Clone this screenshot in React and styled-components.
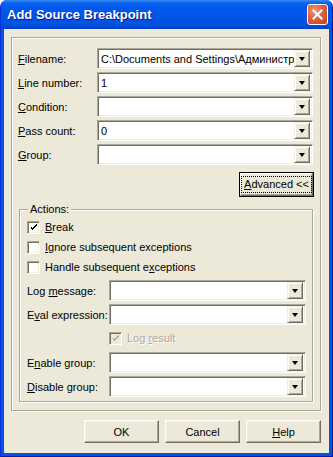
import React from 'react';
import styled, { createGlobalStyle } from 'styled-components';

const GlobalStyle = createGlobalStyle`
  html, body {
    margin: 0;
    padding: 0;
    background: #ffffff;
  }
  body {
    font-family: "Liberation Sans", Arial, sans-serif;
    font-size: 11px;
    color: #000;
  }
`;

const Window = styled.div`
  width: 333px;
  height: 457px;
  box-sizing: border-box;
  display: flex;
  flex-direction: column;
  background: #0054e3;
  border-radius: 7px 7px 0 0;
  border-left: 1px solid #0831d9;
  border-right: 1px solid #001ea0;
  border-bottom: 1px solid #001ea0;
  overflow: hidden;
`;

const TitleBar = styled.div`
  height: 29px;
  flex: none;
  display: flex;
  align-items: center;
  justify-content: space-between;
  padding: 0 4px 0 6px;
  background: linear-gradient(
    to bottom,
    #3d8cf5 0%,
    #0a63f0 10%,
    #0058ee 25%,
    #0055e5 60%,
    #0050dc 88%,
    #0040c8 100%
  );
`;

const Title = styled.span`
  font-family: "Liberation Sans", Arial, sans-serif;
  font-weight: bold;
  font-size: 13px;
  color: #fff;
  text-shadow: 1px 1px 0 #0a1883;
`;

const CloseButton = styled.div`
  width: 21px;
  height: 21px;
  box-sizing: border-box;
  border: 1px solid #fff;
  border-radius: 3px;
  background: radial-gradient(circle at 35% 30%, #f09a7c 0%, #e2603a 45%, #c83c14 100%);
  display: flex;
  align-items: center;
  justify-content: center;
`;

const Client = styled.div`
  flex: 1;
  margin: 0 3px 3px 3px;
  background: #ece9d8;
  display: flex;
  flex-direction: column;
  padding: 8px 8px 0 7px;
`;

const Panel = styled.div`
  border: 1px solid #aca899;
  box-shadow: inset 1px 1px 0 #fff, 1px 1px 0 #fff;
  padding: 10px 6px 8px 6px;
  display: flex;
  flex-direction: column;
`;

const FieldRow = styled.div`
  display: flex;
  align-items: center;
  height: 21px;
  margin-top: ${(p) => p.gap || 0}px;
`;

const Label = styled.span`
  width: ${(p) => p.width}px;
  flex: none;
  white-space: nowrap;
`;

const Combo = styled.div`
  width: ${(p) => p.width}px;
  height: 21px;
  box-sizing: border-box;
  flex: none;
  display: flex;
  align-items: center;
  background: #fff;
  border: 1px solid;
  border-color: #aca899 #fff #fff #aca899;
  box-shadow: inset 1px 1px 0 #716f64, inset -1px -1px 0 #f1efe2;
  padding: 1px 2px 1px 2px;
`;

const ComboValue = styled.span`
  flex: 1;
  padding-left: 1px;
  white-space: nowrap;
  overflow: hidden;
`;

const DropButton = styled.div`
  width: 16px;
  height: 17px;
  box-sizing: border-box;
  flex: none;
  background: #ece9d8;
  border: 1px solid;
  border-color: #f1efe2 #716f64 #716f64 #f1efe2;
  box-shadow: inset 1px 1px 0 #fff, inset -1px -1px 0 #aca899;
  display: flex;
  align-items: center;
  justify-content: center;
  &::after {
    content: '';
    width: 0;
    height: 0;
    border-left: 3.5px solid transparent;
    border-right: 3.5px solid transparent;
    border-top: 4px solid #000;
    margin-top: 1px;
  }
`;

const ButtonFace = styled.div`
  width: ${(p) => p.width || 75}px;
  height: ${(p) => p.height || 23}px;
  box-sizing: border-box;
  flex: none;
  background: #ece9d8;
  border: 1px solid;
  border-color: #fff #716f64 #716f64 #fff;
  box-shadow: inset -1px -1px 0 #aca899, inset 1px 1px 0 #f1efe2;
  display: flex;
  align-items: center;
  justify-content: center;
`;

const DefaultButton = styled(ButtonFace)`
  outline: 1px solid #000;
  align-self: flex-end;
  margin-top: 8px;
  margin-right: 1px;
  & > span {
    border: 1px dotted #000;
    padding: 1px 2px;
    line-height: 13px;
  }
`;

const GroupBox = styled.div`
  position: relative;
  margin: 13px 1px 0 1px;
  border: 1px solid #aca899;
  box-shadow: inset 1px 1px 0 #fff, 1px 1px 0 #fff;
  padding: 7px 5px 4px 7px;
  display: flex;
  flex-direction: column;
`;

const Legend = styled.span`
  position: absolute;
  top: -7px;
  left: 8px;
  padding: 0 2px;
  background: #ece9d8;
  line-height: 13px;
`;

const CheckRow = styled.div`
  display: flex;
  align-items: center;
  height: 20px;
  padding-left: ${(p) => p.indent || 0}px;
  margin-top: ${(p) => p.gap || 0}px;
  color: ${(p) => (p.disabled ? '#aca899' : '#000')};
  text-shadow: ${(p) => (p.disabled ? '1px 1px 0 #fff' : 'none')};
`;

const CheckBox = styled.div`
  width: 13px;
  height: 13px;
  box-sizing: border-box;
  flex: none;
  margin-right: 5px;
  background: ${(p) => (p.disabled ? '#ece9d8' : '#fff')};
  border: 1px solid;
  border-color: #aca899 #fff #fff #aca899;
  box-shadow: inset 1px 1px 0 #716f64, inset -1px -1px 0 #f1efe2;
  display: flex;
  align-items: center;
  justify-content: center;
`;

const ButtonBar = styled.div`
  display: flex;
  justify-content: flex-end;
  gap: 6px;
  margin-top: 9px;
`;

const Check = ({ color }) => (
  <svg width="7" height="7" viewBox="0 0 7 7" shapeRendering="crispEdges">
    <path
      d="M0 2h1v3h1v1h1v-1h1v-1h1v-1h1v-1h1v-2h-1v1h-1v1h-1v1h-1v1h-1v-1h-1v-1h-1z"
      fill={color}
    />
  </svg>
);

const Field = ({ label, value, labelWidth, width, gap }) => (
  <FieldRow gap={gap}>
    <Label width={labelWidth}>{label}</Label>
    <Combo width={width}>
      <ComboValue>{value}</ComboValue>
      <DropButton />
    </Combo>
  </FieldRow>
);

export default function App() {
  return (
    <>
      <GlobalStyle />
      <Window>
        <TitleBar>
          <Title>Add Source Breakpoint</Title>
          <CloseButton>
            <svg width="11" height="11" viewBox="0 0 11 11">
              <path d="M1.5 1.5l8 8M9.5 1.5l-8 8" stroke="#fff" strokeWidth="2" strokeLinecap="square" />
            </svg>
          </CloseButton>
        </TitleBar>
        <Client>
          <Panel>
            <Field labelWidth={79} width={216} label={<><u>F</u>ilename:</>} value="C:\Documents and Settings\Администр" />
            <Field gap={3} labelWidth={79} width={216} label={<><u>L</u>ine number:</>} value="1" />
            <Field gap={3} labelWidth={79} width={216} label={<><u>C</u>ondition:</>} value="" />
            <Field gap={3} labelWidth={79} width={216} label={<><u>P</u>ass count:</>} value="0" />
            <Field gap={3} labelWidth={79} width={216} label={<><u>G</u>roup:</>} value="" />
            <DefaultButton width={73} height={23}>
              <span><u>A</u>dvanced &lt;&lt;</span>
            </DefaultButton>
            <GroupBox>
              <Legend>Actions:</Legend>
              <CheckRow>
                <CheckBox><Check color="#000" /></CheckBox>
                <span><u>B</u>reak</span>
              </CheckRow>
              <CheckRow>
                <CheckBox />
                <span><u>I</u>gnore subsequent exceptions</span>
              </CheckRow>
              <CheckRow>
                <CheckBox />
                <span>Handle subsequent e<u>x</u>ceptions</span>
              </CheckRow>
              <Field gap={3} labelWidth={82} width={197} label={<>Log <u>m</u>essage:</>} value="" />
              <Field gap={3} labelWidth={82} width={197} label={<>E<u>v</u>al expression:</>} value="" />
              <CheckRow indent={82} gap={3} disabled>
                <CheckBox disabled><Check color="#aca899" /></CheckBox>
                <span>Log <u>r</u>esult</span>
              </CheckRow>
              <Field gap={4} labelWidth={82} width={197} label={<>E<u>n</u>able group:</>} value="" />
              <Field gap={3} labelWidth={82} width={197} label={<><u>D</u>isable group:</>} value="" />
            </GroupBox>
          </Panel>
          <ButtonBar>
            <ButtonFace>OK</ButtonFace>
            <ButtonFace>Cancel</ButtonFace>
            <ButtonFace><span><u>H</u>elp</span></ButtonFace>
          </ButtonBar>
        </Client>
      </Window>
    </>
  );
}
